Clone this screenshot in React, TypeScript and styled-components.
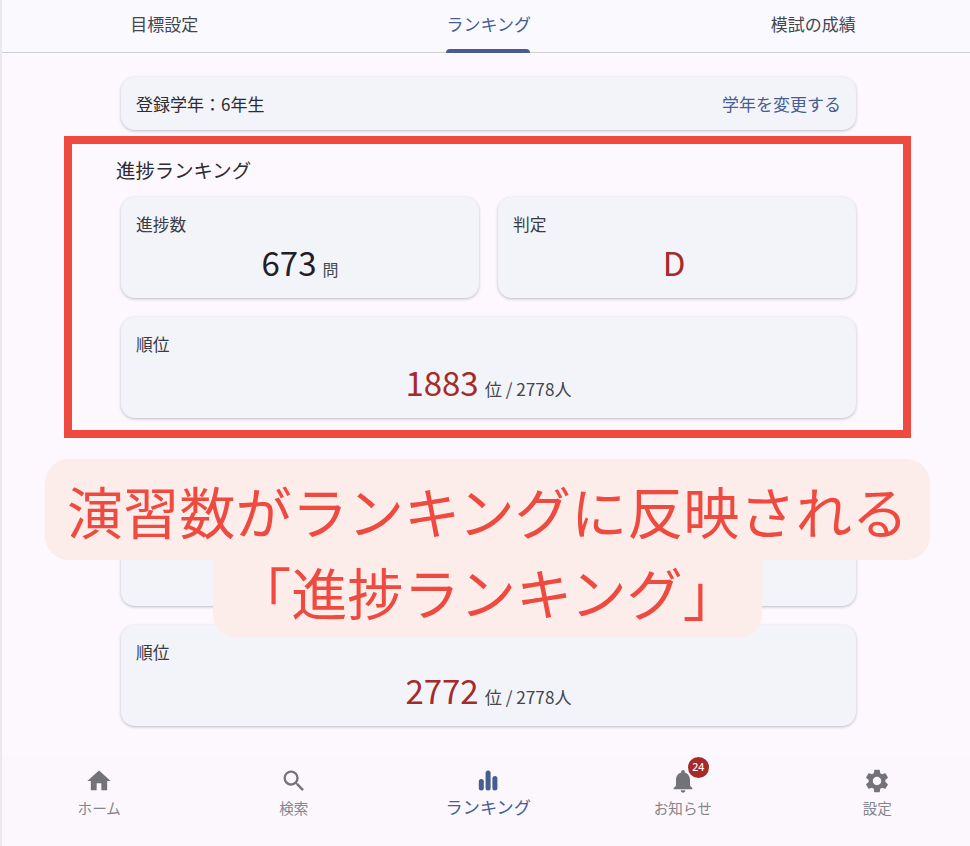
import styled, { createGlobalStyle } from "styled-components";
import { MdHome, MdNotifications, MdSearch, MdSettings } from "react-icons/md";

const FONT = `"Noto Sans CJK JP", "Noto Sans", sans-serif`;
const BLUE = "#475d92";
const DARK_RED = "#a52a2a";
const ALERT = "#ef4a3f";

const GlobalStyle = createGlobalStyle`
  html, body {
    margin: 0;
    padding: 0;
    height: 100%;
    background: #fdf8fe;
    font-family: ${FONT};
    color: #1f2026;
    text-spacing-trim: space-all;
  }
  * {
    box-sizing: border-box;
  }
`;

const Page = styled.div`
  position: relative;
  width: 970px;
  height: 846px;
  padding-left: 2px;
  display: flex;
  flex-direction: column;
  overflow: hidden;
  background: #fdf8fe;

  &::before {
    content: "";
    position: absolute;
    left: 0;
    top: 0;
    bottom: 0;
    width: 2px;
    background: #e9e8ee;
  }
`;

const Tabs = styled.div`
  height: 53px;
  flex: none;
  display: grid;
  grid-template-columns: repeat(3, 324.5px);
  background: #faf9fe;
  border-bottom: 1px solid #cfced4;
`;

const Tab = styled.div<{ $active?: boolean }>`
  position: relative;
  display: flex;
  justify-content: center;
  padding-top: 12px;
  font-size: 17px;
  line-height: 24px;
  color: ${(p) => (p.$active ? BLUE : "#44464f")};
`;

const TabMark = styled.span`
  position: absolute;
  left: 50%;
  bottom: -1px;
  width: 84px;
  height: 4px;
  margin-left: -43px;
  border-radius: 4px 4px 0 0;
  background: ${BLUE};
`;

const Content = styled.main`
  flex: 1;
  min-height: 0;
  padding: 24px 114px 0 119px;
  display: flex;
  flex-direction: column;
`;

const Card = styled.div`
  background: #f3f4fa;
  border-radius: 14px;
  box-shadow: 0 1px 3px rgba(60, 60, 80, 0.32);
`;

const GradeCard = styled(Card)`
  height: 53px;
  padding: 0 15px;
  display: flex;
  align-items: center;
  justify-content: space-between;
  font-size: 17px;
  color: #2b2c32;
`;

const GradeLink = styled.span`
  color: ${BLUE};
`;

const SectionTitle = styled.h2`
  margin: 27px 0 0 -5px;
  height: 26px;
  font-size: 19.4px;
  line-height: 26px;
  font-weight: 400;
  color: #2b2c32;
`;

const Row = styled.div`
  margin-top: 14px;
  display: grid;
  grid-template-columns: 1fr 1fr;
  gap: 19px;
`;

const StatCard = styled(Card)`
  height: 101px;
  padding: 15px 15px 0;
`;

const RankCard = styled(StatCard)`
  margin-top: 19px;
`;

const StatLabel = styled.div`
  font-size: 16.8px;
  line-height: 24px;
  color: #3a3b41;
`;

const StatValue = styled.div`
  margin-top: 3px;
  display: flex;
  justify-content: center;
  align-items: baseline;
  line-height: 46px;
  gap: 6px;
`;

const Number = styled.span<{ $alert?: boolean }>`
  font-size: 33px;
  color: ${(p) => (p.$alert ? DARK_RED : "#1f2026")};
`;

const Unit = styled.span<{ $long?: boolean }>`
  font-size: ${(p) => (p.$long ? "17.2px" : "16px")};
  color: #44464f;
`;

const HiddenSection = styled.section`
  margin-top: 20px;
`;

const Frame = styled.div`
  position: absolute;
  left: 64px;
  top: 136px;
  width: 847px;
  height: 302px;
  border: 8px solid ${ALERT};
  pointer-events: none;
`;

const Callout = styled.div`
  position: absolute;
  left: 45px;
  top: 459px;
  width: 885px;
  display: flex;
  flex-direction: column;
  align-items: center;
  color: ${ALERT};
`;

const CalloutMain = styled.div`
  width: 100%;
  height: 101px;
  border-radius: 24px;
  background: #fcecea;
  font-size: 56.2px;
  line-height: 101px;
  text-align: center;
  white-space: nowrap;
`;

const CalloutSub = styled.div`
  width: 549px;
  height: 78px;
  margin-left: -1px;
  border-radius: 0 0 24px 24px;
  background: #fcecea;
  font-size: 56.2px;
  line-height: 62px;
  text-align: center;
  white-space: nowrap;
`;

const BottomNav = styled.nav`
  height: 91px;
  flex: none;
  display: grid;
  grid-template-columns: repeat(5, 194.5px);
  background: #fbf7fd;
`;

const NavItem = styled.div<{ $active?: boolean }>`
  display: flex;
  flex-direction: column;
  align-items: center;
  padding-top: 12px;
  color: ${(p) => (p.$active ? BLUE : "#737279")};
`;

const NavIcon = styled.span`
  position: relative;
  width: 28px;
  height: 28px;
  display: flex;
  align-items: center;
  justify-content: center;
  font-size: 28px;
`;

const NavText = styled.span<{ $active?: boolean }>`
  margin-top: ${(p) => (p.$active ? "1px" : "2px")};
  font-size: ${(p) => (p.$active ? "17.2px" : "14.6px")};
  line-height: 22px;
  color: ${(p) => (p.$active ? BLUE : "#85848b")};
`;

const Badge = styled.span`
  position: absolute;
  left: 19px;
  top: -10px;
  width: 21px;
  height: 21px;
  border-radius: 50%;
  background: ${DARK_RED};
  color: #fff;
  font-size: 10.5px;
  font-weight: 500;
  line-height: 21px;
  text-align: center;
  font-family: "Noto Sans", sans-serif;
`;

function RankingIcon() {
  return (
    <svg width="28" height="28" viewBox="0 0 28 28" fill="currentColor">
      <rect x="4.8" y="12" width="5" height="11.5" rx="2.5" />
      <rect x="11.6" y="3.5" width="5" height="20" rx="2.5" />
      <rect x="18.4" y="9" width="5" height="14.5" rx="2.5" />
    </svg>
  );
}

export default function App() {
  return (
    <Page>
      <GlobalStyle />
      <Tabs>
        <Tab>目標設定</Tab>
        <Tab $active>
          ランキング
          <TabMark />
        </Tab>
        <Tab>模試の成績</Tab>
      </Tabs>

      <Content>
        <GradeCard>
          <span>登録学年{"\uFF1A"}6年生</span>
          <GradeLink>学年を変更する</GradeLink>
        </GradeCard>

        <section>
          <SectionTitle>進捗ランキング</SectionTitle>
          <Row>
            <StatCard>
              <StatLabel>進捗数</StatLabel>
              <StatValue>
                <Number>673</Number>
                <Unit>問</Unit>
              </StatValue>
            </StatCard>
            <StatCard>
              <StatLabel>判定</StatLabel>
              <StatValue>
                <Number $alert>D</Number>
                <Unit />
              </StatValue>
            </StatCard>
          </Row>
          <RankCard>
            <StatLabel>順位</StatLabel>
            <StatValue>
              <Number $alert>1883</Number>
              <Unit $long>位 / 2778人</Unit>
            </StatValue>
          </RankCard>
        </section>

        <HiddenSection>
          <SectionTitle />
          <Row>
            <StatCard />
            <StatCard />
          </Row>
          <RankCard>
            <StatLabel>順位</StatLabel>
            <StatValue>
              <Number $alert>2772</Number>
              <Unit $long>位 / 2778人</Unit>
            </StatValue>
          </RankCard>
        </HiddenSection>
      </Content>

      <BottomNav>
        <NavItem>
          <NavIcon>
            <MdHome />
          </NavIcon>
          <NavText>ホーム</NavText>
        </NavItem>
        <NavItem>
          <NavIcon>
            <MdSearch />
          </NavIcon>
          <NavText>検索</NavText>
        </NavItem>
        <NavItem $active>
          <NavIcon>
            <RankingIcon />
          </NavIcon>
          <NavText $active>ランキング</NavText>
        </NavItem>
        <NavItem>
          <NavIcon>
            <MdNotifications />
            <Badge>24</Badge>
          </NavIcon>
          <NavText>お知らせ</NavText>
        </NavItem>
        <NavItem>
          <NavIcon>
            <MdSettings />
          </NavIcon>
          <NavText>設定</NavText>
        </NavItem>
      </BottomNav>

      <Frame />
      <Callout>
        <CalloutMain>演習数がランキングに反映される</CalloutMain>
        <CalloutSub>「進捗ランキング」</CalloutSub>
      </Callout>
    </Page>
  );
}
